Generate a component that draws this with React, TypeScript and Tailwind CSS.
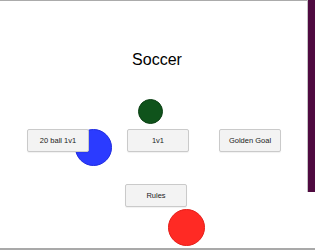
export default function App() {
  const buttonClass =
    "relative z-10 w-[62px] h-[23px] bg-[#f3f3f3] border border-[#cacaca] rounded-[2px] text-[7.5px] text-[#222] flex items-center justify-center shadow-[0_1px_1px_rgba(0,0,0,0.06)]";

  return (
    <div className="relative w-[315px] h-[250px] bg-white flex flex-col overflow-hidden font-['Liberation_Sans',Arial,sans-serif]">
      <div className="flex h-[248px]">
        <div className="w-[307px] border-t border-[#ababab] flex flex-col">
          <h1 className="mt-[51px] h-[16px] leading-[16px] text-[16px] text-black text-center pl-[7px]">Soccer</h1>

          <div className="mt-[61px] flex pl-[27px]">
            <button className={buttonClass}>20 ball 1v1</button>
            <button className={buttonClass + " ml-[38px]"}>1v1</button>
            <button className={buttonClass + " ml-[30px]"}>Golden Goal</button>
          </div>

          <div className="mt-[32px] flex pl-[125px]">
            <button className={buttonClass}>Rules</button>
          </div>
        </div>
        <div className="w-[8px] h-[192px] bg-[#4f0a40] border-l border-[#c4c4c4]" />
      </div>
      <div className="h-[2px] bg-[#a9a9a9]" />

      {/* balls */}
      <div className="absolute left-[138px] top-[99px] w-[25px] h-[25px] rounded-full bg-[#0f531b] border border-[#0b4014]" />
      <div className="absolute left-[75px] top-[129px] w-[37px] h-[37px] rounded-full bg-[#2b3bff] border border-[#1f2be0]" />
      <div className="absolute left-[168px] top-[209px] w-[37px] h-[37px] rounded-full bg-[#ff2a24] border border-[#e51d18]" />
    </div>
  );
}
